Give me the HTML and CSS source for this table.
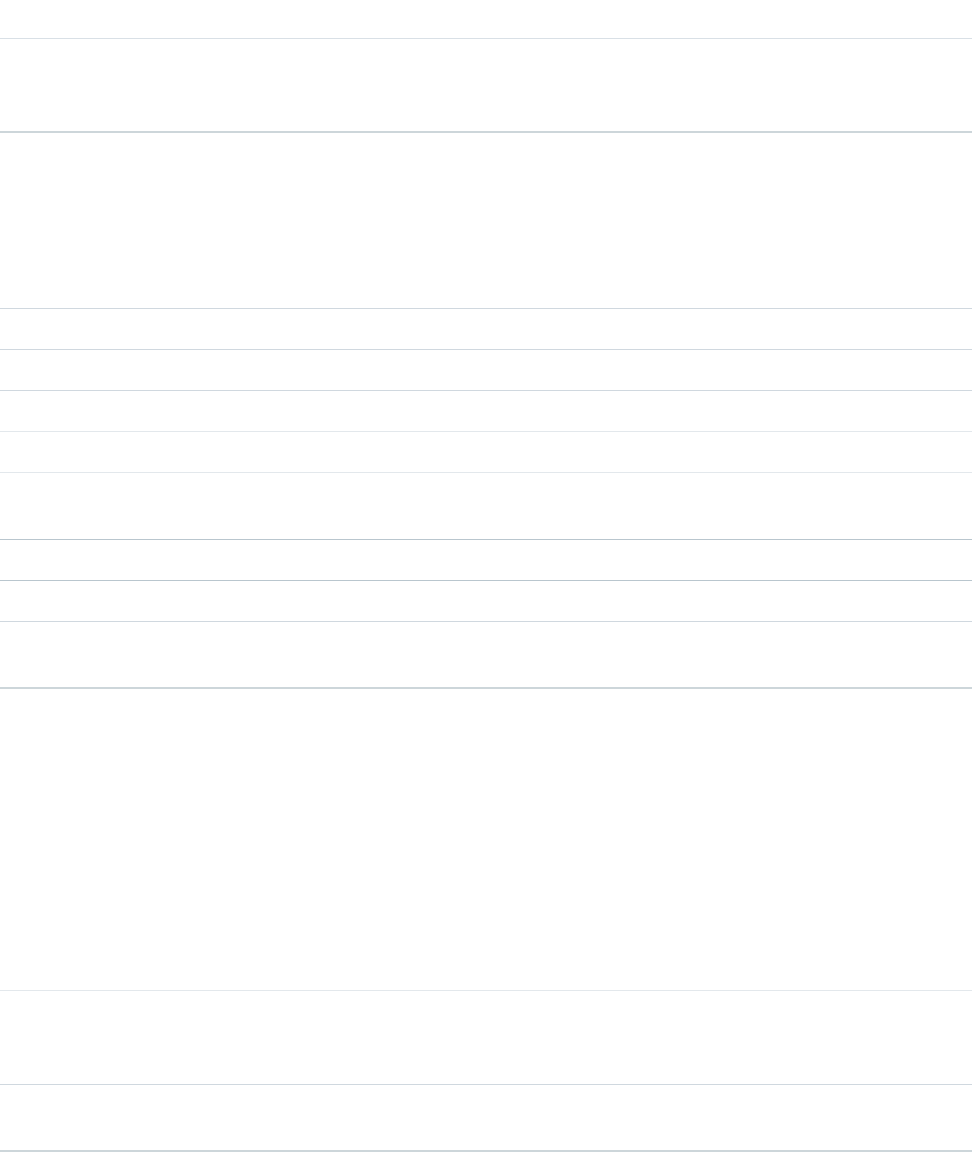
FILE: index.html
```html
<!DOCTYPE html>
<html lang="en">

<head>
    <meta charset="UTF-8">
    <meta name="viewport" content="width=device-width, initial-scale=1.0">
    <title>Sheet</title>
    <link rel="stylesheet" href="styles.css">
</head>

<body>
    <div class="sheet">
        <div class="row h38 line-soft"></div>
        <div class="row h92 line-thick"></div>
        <div class="row h175 line-mid"></div>
        <div class="row h40 line-mid"></div>
        <div class="row h40 line-mid"></div>
        <div class="row h40 line-light"></div>
        <div class="row h40 line-light"></div>
        <div class="row h66 line-dark"></div>
        <div class="row h40 line-dark"></div>
        <div class="row h40 line-mid"></div>
        <div class="row h65 line-thick"></div>
        <div class="row h301 line-light"></div>
        <div class="row h93 line-mid"></div>
        <div class="row h65 line-thick"></div>
    </div>
</body>

</html>
```

FILE: styles.css
```css
body {
    margin: 0;
    font-family: "Liberation Sans", Arial, sans-serif;
    background-color: #fff;
    color: #333;
}

.sheet {
    width: 972px;
    display: flex;
    flex-direction: column;
}

.row {
    box-sizing: content-box;
    border-bottom: 1px solid #d5dce3;
}

.h38 { height: 38px; }
.h40 { height: 40px; }
.h65 { height: 65px; }
.h66 { height: 66px; }
.h92 { height: 92px; }
.h93 { height: 93px; }
.h175 { height: 175px; }
.h301 { height: 301px; }

.line-soft {
    border-bottom-color: #d9e0e6;
}

.line-mid {
    border-bottom-color: #d0d8df;
}

.line-light {
    border-bottom-color: #e3e8ec;
}

.line-dark {
    border-bottom-color: #b9c6ce;
}

.line-thick {
    border-bottom: 2px solid #cdd6da;
}
```
